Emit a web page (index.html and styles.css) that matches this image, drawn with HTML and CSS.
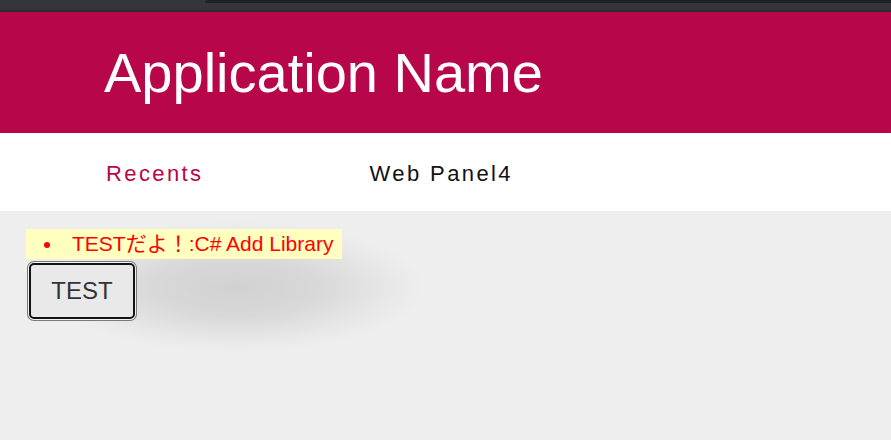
FILE: index.html
```html
<!DOCTYPE html>
<html lang="ja">
<head>
<meta charset="utf-8">
<title>Application Name</title>
<link rel="stylesheet" href="styles.css">
</head>
<body>
<div class="chrome">
  <div class="chrome-top"><span class="chrome-left"></span><span class="chrome-right"></span></div>
  <div class="chrome-mid"></div>
  <div class="chrome-bottom"></div>
</div>
<header class="appbar">
  <h1 class="app-title">Application Name</h1>
</header>
<nav class="tabs">
  <a class="tab tab-active">Recents</a>
  <a class="tab">Web Panel4</a>
</nav>
<main class="content">
  <ul class="messages">
    <li class="message">TESTだよ！:C# Add Library</li>
  </ul>
  <div class="actions">
    <button class="btn" type="button">TEST</button>
  </div>
</main>
</body>
</html>
```
FILE: styles.css
```css
html, body {
  margin: 0;
  padding: 0;
  background: #eeeeee;
  font-family: "Liberation Sans", Arial, "Noto Sans CJK JP", sans-serif;
}

.chrome {
  height: 12px;
  display: flex;
  flex-direction: column;
  background: #35363a;
}
.chrome-top {
  height: 3px;
  display: flex;
}
.chrome-left {
  width: 205px;
  background: #35363a;
}
.chrome-right {
  flex: 1;
  background: #202124;
  border-top-left-radius: 3px;
}
.chrome-mid {
  flex: 1;
  background: #35363a;
}
.chrome-bottom {
  height: 2px;
  background: #2a2b2e;
}

.appbar {
  height: 121px;
  box-sizing: border-box;
  background: #b8064a;
  padding: 33px 0 0 104px;
}
.app-title {
  margin: 0;
  font-size: 56px;
  line-height: 56px;
  font-weight: normal;
  color: #ffffff;
}

.tabs {
  height: 78px;
  box-sizing: border-box;
  background: #ffffff;
  padding: 28px 0 0 106px;
  display: flex;
  gap: 166px;
  box-shadow: 0 1px 4px rgba(0, 0, 0, 0.04);
}
.tab {
  font-size: 22px;
  line-height: 26px;
  letter-spacing: 2.4px;
  color: #111111;
  text-decoration: none;
}
.tab-active {
  color: #b8064a;
}

.content {
  height: 229px;
  box-sizing: border-box;
  padding: 18px 0 0 26px;
  background:
    radial-gradient(ellipse 190px 66px at 235px 76px, rgba(0, 0, 0, 0.12), rgba(0, 0, 0, 0.09) 45%, rgba(0, 0, 0, 0.02) 85%, rgba(0, 0, 0, 0) 100%),
    #eeeeee;
}

.messages {
  width: fit-content;
  margin: 0;
  padding: 0 9px 0 18px;
  list-style: none;
  background: #ffffc0;
}
.message {
  font-size: 21px;
  line-height: 30px;
  color: #ff0000;
}
.message::before {
  content: "";
  display: inline-block;
  width: 6px;
  height: 6px;
  border-radius: 50%;
  background: #ff0000;
  margin-right: 22px;
  vertical-align: 3px;
}

.actions {
  margin-top: 4px;
  padding-left: 3px;
}
.btn {
  width: 106px;
  height: 56px;
  box-sizing: border-box;
  padding: 0;
  border: 2px solid #141414;
  border-radius: 5px;
  background: #e9e9e9;
  color: #333333;
  font-family: "Liberation Sans", Arial, sans-serif;
  font-size: 24px;
  box-shadow: 0 0 0 1px #f2f2f2, 0 0 0 2px #7a7a7a;
}
```
